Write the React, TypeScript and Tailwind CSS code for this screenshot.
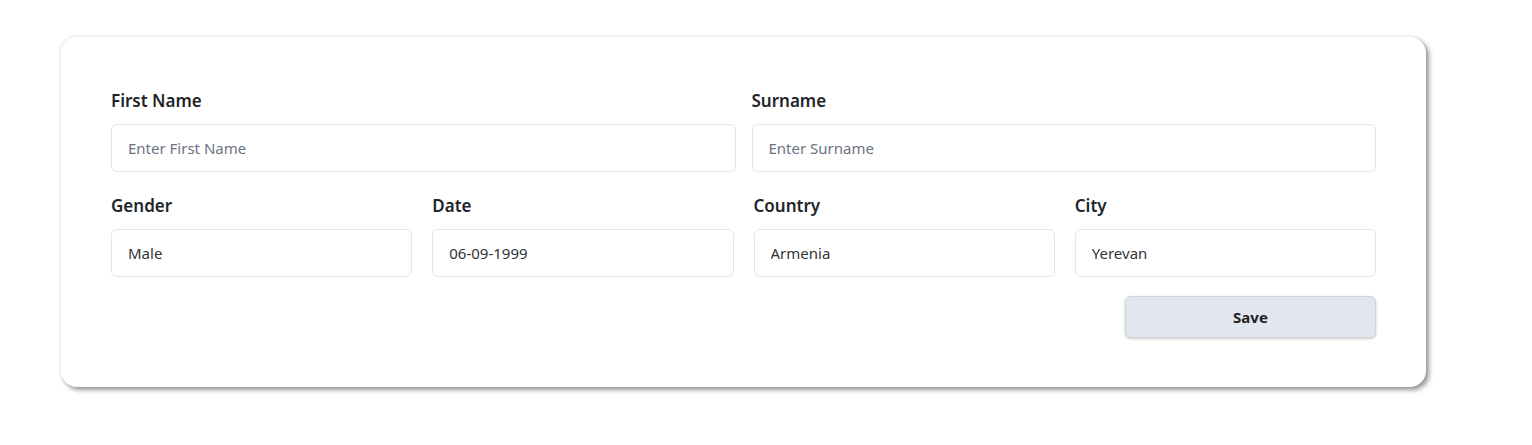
export default function App() {
  const row2 = [
    { label: "Gender", value: "Male" },
    { label: "Date", value: "06-09-1999" },
    { label: "Country", value: "Armenia" },
    { label: "City", value: "Yerevan" },
  ];

  return (
    <div className="min-h-[445px] bg-white pt-[37px] pl-[61px] font-['Noto_Sans',sans-serif]">
      <div className="w-[1365px] rounded-2xl bg-white px-[50px] pt-[52px] pb-[49px] shadow-[0_0_4px_rgba(0,0,0,0.12),3px_3px_5px_rgba(0,0,0,0.4)]">
        <div className="grid grid-cols-2 gap-x-4">
          <div>
            <label className="block text-[17px] leading-6 font-semibold text-[#212529] mb-[11px]">First Name</label>
            <input
              className="h-12 w-full rounded-md border border-[#e3e5e8] px-4 text-[15px] text-[#333] placeholder:text-[#6c727f] outline-none"
              placeholder="Enter First Name"
            />
          </div>
          <div>
            <label className="block text-[17px] leading-6 font-semibold text-[#212529] mb-[11px]">Surname</label>
            <input
              className="h-12 w-full rounded-md border border-[#e3e5e8] px-4 text-[15px] text-[#333] placeholder:text-[#6c727f] outline-none"
              placeholder="Enter Surname"
            />
          </div>
        </div>

        <div className="mt-[22px] grid grid-cols-4 gap-x-5">
          {row2.map((f) => (
            <div key={f.label}>
              <label className="block text-[17px] leading-6 font-semibold text-[#212529] mb-[11px]">{f.label}</label>
              <input
                className="h-12 w-full rounded-md border border-[#e3e5e8] px-4 text-[15px] text-[#333] outline-none"
                defaultValue={f.value}
              />
            </div>
          ))}
        </div>

        <div className="mt-[19px] flex justify-end">
          <button className="h-[42px] w-[251px] rounded-md border border-[#cfd3da] bg-[#e2e6ef] text-[15px] font-bold text-[#1f1f1f] shadow-[0_1px_3px_rgba(0,0,0,0.2)]">
            Save
          </button>
        </div>
      </div>
    </div>
  );
}
